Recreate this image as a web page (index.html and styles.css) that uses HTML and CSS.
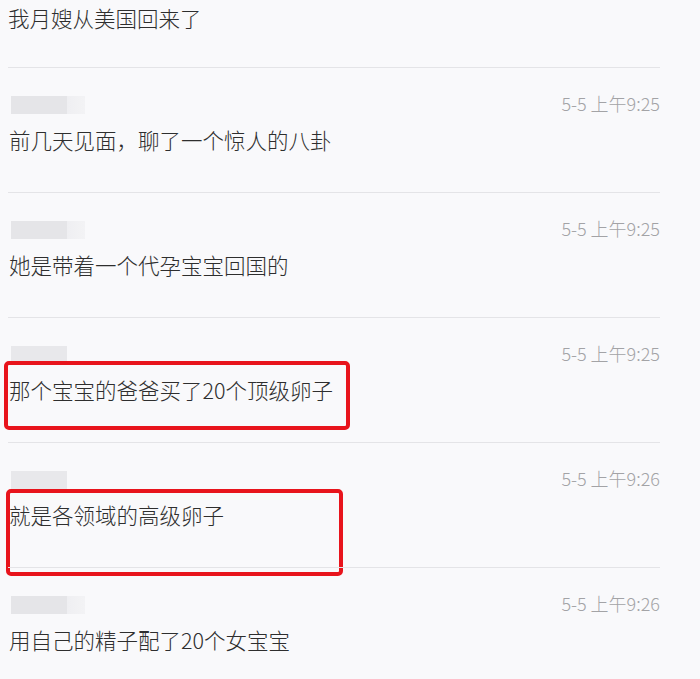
FILE: index.html
```html
<!DOCTYPE html>
<html lang="zh">
  <head>
    <meta charset="utf-8">
    <title>聊天记录</title>
    <link rel="stylesheet" href="styles.css">
  </head>
  <body>
    <section class="chat">
      <p class="text first">我月嫂从美国回来了</p>

      <div class="msg">
        <div class="head">
          <span class="name"></span>
          <span class="time">5-5 上午9:25</span>
        </div>
        <p class="text">前几天见面，聊了一个惊人的八卦</p>
      </div>

      <div class="msg">
        <div class="head">
          <span class="name"></span>
          <span class="time">5-5 上午9:25</span>
        </div>
        <p class="text">她是带着一个代孕宝宝回国的</p>
      </div>

      <div class="msg">
        <div class="head">
          <span class="name short"></span>
          <span class="time">5-5 上午9:25</span>
        </div>
        <p class="text">那个宝宝的爸爸买了20个顶级卵子</p>
        <div class="mark mark-a"></div>
      </div>

      <div class="msg">
        <div class="head">
          <span class="name short"></span>
          <span class="time">5-5 上午9:26</span>
        </div>
        <p class="text">就是各领域的高级卵子</p>
        <div class="mark mark-b"></div>
      </div>

      <div class="msg">
        <div class="head">
          <span class="name"></span>
          <span class="time">5-5 上午9:26</span>
        </div>
        <p class="text">用自己的精子配了20个女宝宝</p>
      </div>
    </section>
  </body>
</html>
```

FILE: styles.css
```css
body {
  margin: 0;
  background: #f9f9fb;
  font-family: "Noto Sans CJK SC", "Noto Sans", sans-serif;
  overflow: hidden;
}
.chat {
  margin: 0 40px 0 8px;
}
.text {
  margin: 0;
  font-size: 21.5px;
  font-weight: 300;
  line-height: 36px;
  color: #2e2e2e;
  white-space: nowrap;
}
.text.first {
  height: 67px;
}
.msg {
  position: relative;
  height: 124px;
  border-top: 1px solid #e4e4e7;
}
.head {
  display: flex;
  align-items: center;
  justify-content: space-between;
  height: 26px;
  margin-top: 22px;
}
.name {
  display: block;
  width: 74px;
  height: 18px;
  margin: 4px 0 0 3px;
  background: linear-gradient(to right, #e5e5e8 0, #e5e5e8 56px, #efeff2 56px, #f3f3f5 74px);
  filter: blur(0.6px);
}
.name.short {
  width: 56px;
  background: #e8e8eb;
}
.time {
  font-size: 18px;
  font-weight: 300;
  color: #a3a3a6;
}
.msg .text {
  margin-top: 6px;
  padding-left: 1px;
}
.mark {
  position: absolute;
  border: 4px solid #e8141c;
  border-radius: 5px;
}
.mark-a {
  top: 43px;
  left: -4px;
  width: 338px;
  height: 61px;
}
.mark-b {
  top: 46px;
  left: -2px;
  width: 329px;
  height: 79px;
}
```
